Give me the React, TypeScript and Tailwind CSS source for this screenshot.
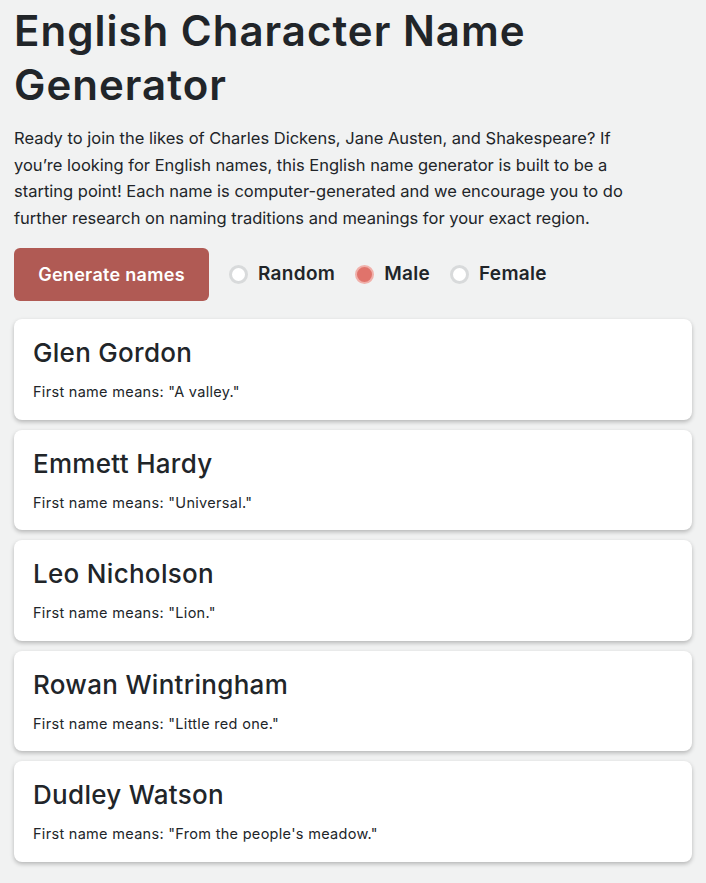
import React from "react";

const names = [
  { name: "Glen Gordon", meaning: '"A valley."' },
  { name: "Emmett Hardy", meaning: '"Universal."' },
  { name: "Leo Nicholson", meaning: '"Lion."' },
  { name: "Rowan Wintringham", meaning: '"Little red one."' },
  { name: "Dudley Watson", meaning: '"From the people\'s meadow."' },
];

function Radio({ label, checked }: { label: string; checked?: boolean }) {
  return (
    <label className="flex items-center gap-[10px]">
      {checked ? (
        <span className="w-[19px] h-[19px] rounded-full bg-[#e0736b] border-[2px] border-[#f0b0aa]" />
      ) : (
        <span className="w-[19px] h-[19px] rounded-full bg-white border-[3px] border-[#d8dadb]" />
      )}
      <span className="text-[19px] font-semibold tracking-[0.3px] text-[#212529]">{label}</span>
    </label>
  );
}

export default function App() {
  return (
    <div
      className="min-h-[883px] bg-[#f1f2f2] px-[14px] pt-[4px] pb-[20px] text-[#212529]"
      style={{ fontFamily: "Inter, 'Noto Sans', sans-serif" }}
    >
      <h1 className="max-w-[580px] text-[42px] leading-[54px] font-semibold tracking-[1px]">
        English Character Name Generator
      </h1>
      <p className="mt-[13px] max-w-[640px] text-[16.5px] leading-[26.5px]">
        Ready to join the likes of Charles Dickens, Jane Austen, and Shakespeare? If you’re looking for English names, this English name generator is built to be a starting point! Each name is computer-generated and we encourage you to do further research on naming traditions and meanings for your exact region.
      </p>
      <div className="mt-[17px] flex items-center">
        <button className="h-[53px] w-[195px] rounded-[6px] bg-[#b05a54] text-white text-[18px] font-semibold tracking-[0.3px]">
          Generate names
        </button>
        <div className="ml-[20px] flex items-center gap-[20px]">
          <Radio label="Random" />
          <Radio label="Male" checked />
          <Radio label="Female" />
        </div>
      </div>
      <div className="mt-[18px] flex flex-col gap-[10px]">
        {names.map((n) => (
          <div
            key={n.name}
            className="h-[100.5px] rounded-[8px] bg-white px-[19px] pt-[18px] shadow-[0_2px_4px_rgba(0,0,0,0.25)]"
          >
            <div className="text-[26px] leading-[32px] font-medium tracking-[0.3px]">{n.name}</div>
            <div className="mt-[13px] text-[14.5px] leading-[20px] tracking-[0.3px]">
              First name means: {n.meaning}
            </div>
          </div>
        ))}
      </div>
    </div>
  );
}
